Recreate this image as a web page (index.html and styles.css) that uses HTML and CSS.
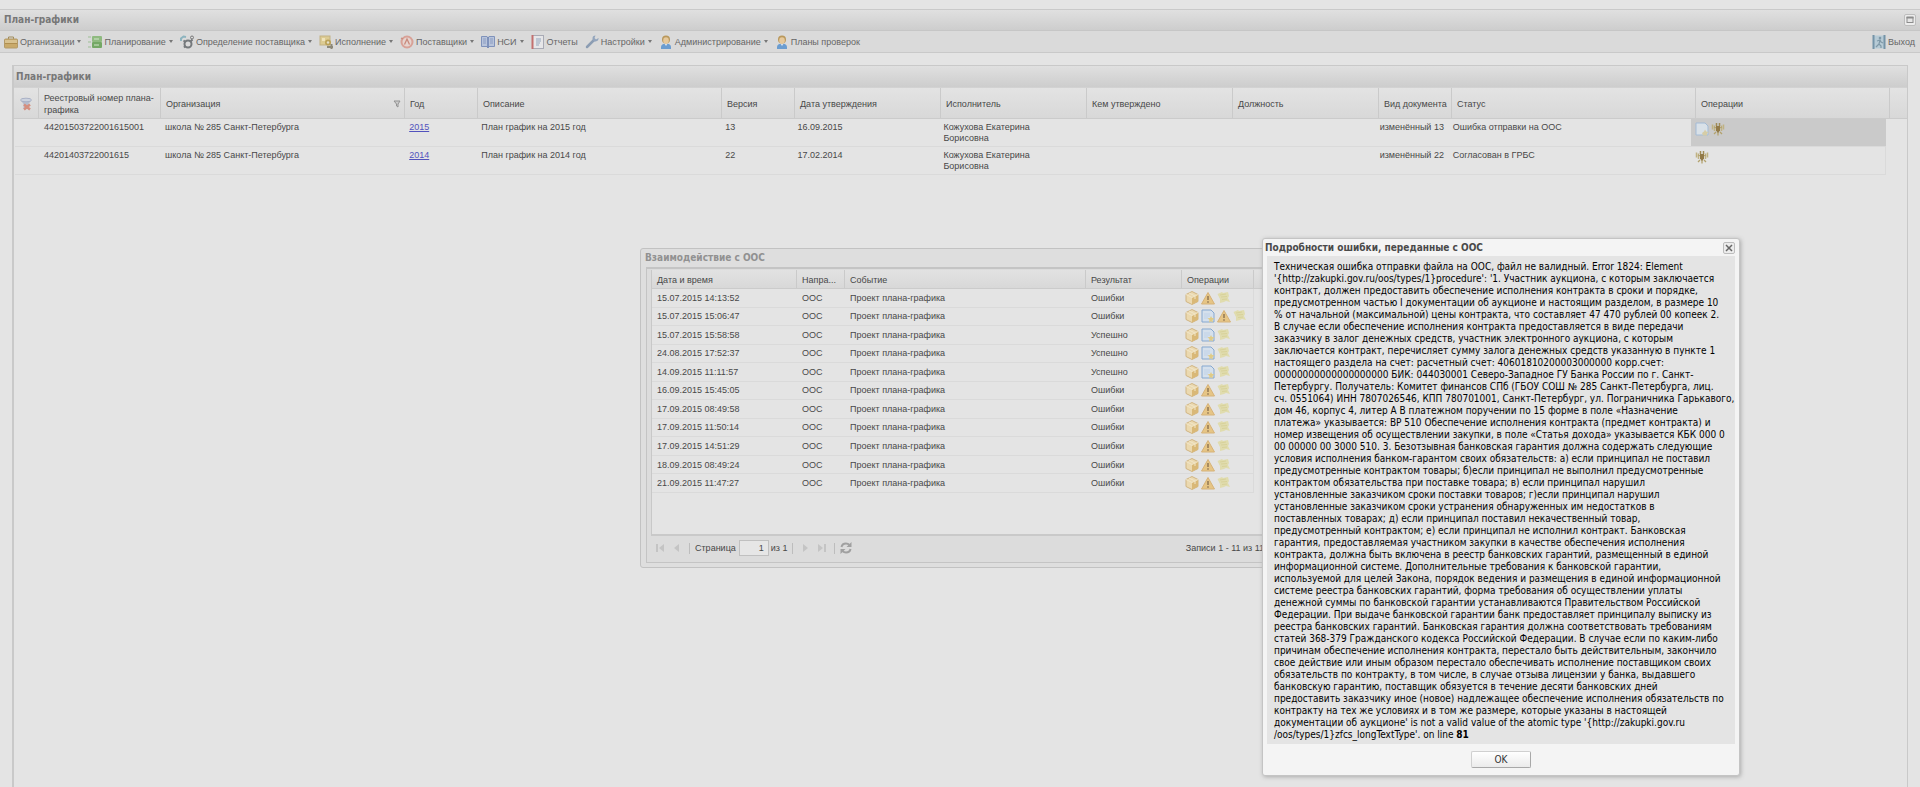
FILE: index.html
```html
<!DOCTYPE html>
<html lang="ru">
<head>
<meta charset="utf-8">
<title>План-графики</title>
<link rel="stylesheet" href="styles.css">
</head>
<body>
<svg class="sprite" aria-hidden="true">
  <symbol id="case" viewBox="0 0 14 14"><path d="M4.500 4V2h5v2" fill="none" stroke="#a08c5c"/><rect x=".5" y="4" width="13" height="9" rx="1" fill="#c9aa6a" stroke="#b39a68"/><path d="M1 5h12v3H1z" fill="#d8c290"/><path d="M1 8.500h12" stroke="#b08f50"/></symbol>
  <symbol id="plan" viewBox="0 0 14 14"><rect x="4" y="1" width="10" height="6" rx="1" fill="#8fba80"/><rect x="4" y="7" width="10" height="6" rx="1" fill="#74a865"/><path d="M6 4h5M6 10h5" stroke="#d2e6cb"/><path d="M0 2h3M0 7h3M0 12h3" stroke="#9dbf95"/></symbol>
  <symbol id="gears" viewBox="0 0 14 14"><circle cx="8" cy="9" r="3.500" fill="none" stroke="#75797c" stroke-width="2"/><path d="M1 6V3.500L3.500 1.500 6 2" fill="none" stroke="#8db4bf" stroke-width="2"/><circle cx="12" cy="2.500" r="1.500" fill="none" stroke="#777"/><path d="M3.500 5.500l2 1.500M10.500 6.500l2-2M4 12.500l1.500-1.500" stroke="#75797c" stroke-width="2"/></symbol>
  <symbol id="exec" viewBox="0 0 14 14"><rect x="1" y="1" width="10" height="9" fill="#dccb93" stroke="#c2b183"/><path d="M3 3h3v3H3z" fill="#efe3bd"/><circle cx="9" cy="7.500" r="3" fill="#bba258"/><circle cx="9" cy="7.500" r="1.200" fill="#e5dfc8"/><path d="M8 12h6M12.500 9v5" stroke="#8c8878" stroke-width="2"/></symbol>
  <symbol id="supplier" viewBox="0 0 14 14"><circle cx="7" cy="7" r="5.500" fill="#e6d4cf" stroke="#d8a197" stroke-width="2"/><path d="M4.500 9.500L7 4l2.500 5.500M1 3l2 1" fill="none" stroke="#c9897c" stroke-width="1.300"/></symbol>
  <symbol id="book" viewBox="0 0 14 14"><path d="M.5 1.500h5.500l1 1 1-1h5.500v10H8l-1 1-1-1H.5z" fill="#b8c4db" stroke="#7f92bb"/><path d="M7 2v11" stroke="#6d82b0" stroke-width="1.500"/><path d="M2 4h3M2 6h3M2 8h3M9 4h3M9 6h3M9 8h3" stroke="#8b9cc2"/></symbol>
  <symbol id="report" viewBox="0 0 14 14"><rect x="1.500" y=".5" width="11" height="13" fill="#e6e6e8" stroke="#a9abb5"/><path d="M1.500 0v14" stroke="#c3706f" stroke-width="2"/><path d="M5 4h5M5 6h5M5 8h4M5 10h3" stroke="#93a6bd"/></symbol>
  <symbol id="wrench" viewBox="0 0 14 14"><path d="M2 12l7-7" stroke="#8c9db3" stroke-width="2.500" stroke-linecap="round"/><path d="M13.500 3a3 3 0 1 1-3-2.500L9.500 3l1.500 1.500z" fill="#93a5bd"/></symbol>
  <symbol id="user" viewBox="0 0 14 14"><path d="M2 14v-2c0-2 2-3.500 5-3.500s5 1.500 5 3.500v2z" fill="#6b9dd0"/><path d="M5 8h4l-2 3z" fill="#dbe3ea"/><circle cx="7" cy="4.500" r="4" fill="#b9985c"/><ellipse cx="7" cy="5.500" rx="2.800" ry="3.200" fill="#e6c99c"/></symbol>
  <symbol id="exit" viewBox="0 0 14 14"><rect x="1" y=".5" width="12" height="13" fill="#b7cbd6"/><path d="M1.500 0v14M12.500 0v14" stroke="#7594a8" stroke-width="2"/><circle cx="8" cy="3" r="1.300" fill="#7f99a8"/><path d="M5 6l3-1 1 2 2 1M8 5L7 9l2 2v2M7 9l-3 3" fill="none" stroke="#7f99a8" stroke-width="1.200"/></symbol>
  <symbol id="unfilter" viewBox="0 0 14 14"><path d="M1.500 3h11L9.500 7v5h-5V7z" fill="#b5bccd"/><ellipse cx="7" cy="3" rx="5.500" ry="1.800" fill="#ccd2de" stroke="#a9b1c6"/><path d="M5 7.500l6 5M11 7.500l-6 5" stroke="#d58f7f" stroke-width="2.500"/></symbol>
  <symbol id="page" viewBox="0 0 14 14"><path d="M1 1h9l3 3v9H1z" fill="#d5e0ec" stroke="#86a8d0"/><path d="M3 5h6M3 7h6M3 9h4" stroke="#c0d2e8"/><path d="M10 7l1 2 2.500.300-2 1.700.500 2.500-2-1.200-2 1.200.500-2.500-2-1.700L9 9z" fill="#e0cb86"/></symbol>
  <symbol id="draft" viewBox="0 0 14 14"><path d="M1 1h9l3 3v9H1z" fill="#d9e1e8" stroke="#a3bbd6"/><path d="M10 7.500l1.200 2 2.300.500-1.500 1.500v2H8L7 11l2-1.500z" fill="#d6cda6"/></symbol>
  <symbol id="eagle" viewBox="0 0 14 14"><path d="M1.500 2.500v5M3.500 3.500v5.500M12.500 2.500v5M10.500 3.500v5.500" stroke="#c0b283" stroke-width="1.500"/><path d="M3 5l2.500 1M11 5L8.500 6M5 10l-2 2M9 10l2 2M7 10v3.500" stroke="#b3a26d" stroke-width="1.300"/><path d="M5.500 1v3M8.500 1v3" stroke="#a08c55" stroke-width="1.500"/><path d="M5 4h4v4.500L7 11 5 8.500z" fill="#927a48"/></symbol>
  <symbol id="box" viewBox="0 0 14 14"><path d="M7 .5l6 3v7l-6 3-6-3v-7z" fill="#ebd9b0" stroke="#d0b582"/><path d="M7 6.500l6-3v7l-6 3z" fill="#d9b877"/><path d="M1 3.500l6 3 6-3M4 2l6 3v3" fill="none" stroke="#f1e6c8"/></symbol>
  <symbol id="warn" viewBox="0 0 14 14"><path d="M7 1.500L13.500 13H.5z" fill="#e6c585" stroke="#d6b278" stroke-linejoin="round"/><path d="M7 5v4M7 10.300v1.400" stroke="#856a4c" stroke-width="1.300"/></symbol>
  <symbol id="note" viewBox="0 0 14 14"><path d="M.5 3L5 1l1 1 5-1 1 4-1 2 2 4-4-1-2 1-4 1 0-4z" fill="#e0dcae"/><path d="M3 4l6-1M4 6l6-.500M5 8.500l5-.500" stroke="#d8d29a"/></symbol>
  <symbol id="funnel" viewBox="0 0 8 8"><path d="M1 1h6L5 4v3L3.500 6V4z" fill="#ccc" stroke="#929292"/></symbol>
  <symbol id="first" viewBox="0 0 10 10"><path d="M1 1h2v8H1zM9 1v8L4 5z" fill="#c4c4c4"/></symbol>
  <symbol id="prev" viewBox="0 0 10 10"><path d="M7 1v8L2 5z" fill="#c4c4c4"/></symbol>
  <symbol id="next" viewBox="0 0 10 10"><path d="M3 1v8l5-4z" fill="#c4c4c4"/></symbol>
  <symbol id="last" viewBox="0 0 10 10"><path d="M7 1h2v8H7zM1 1v8l5-4z" fill="#c4c4c4"/></symbol>
  <symbol id="reload" viewBox="0 0 12 12"><path d="M1.500 5C2 2.500 4 1.500 6 1.500c1.500 0 2.500.500 3.500 1.500M10.500 7C10 9.500 8 10.500 6 10.500c-1.500 0-2.500-.500-3.500-1.500" fill="none" stroke="#a0a0a0" stroke-width="2"/><path d="M11.500 0v5h-5zM.5 12V7h5z" fill="#a0a0a0"/></symbol>
</svg>

<div class="app">
  <header class="bar">
    <h1 class="title">План-графики</h1>
    <button class="tool" type="button" aria-label="Развернуть"><svg viewBox="0 0 10 10"><rect x="2" y="2.500" width="6" height="5" fill="#e6e6e6" stroke="#8c8c8c"/><path d="M1.500 2.500h7" stroke="#8c8c8c" stroke-width="2"/></svg></button>
  </header>
  <nav class="menu">
    <button class="item drop" type="button"><svg class="icon"><use href="#case"/></svg>Организации</button>
    <button class="item drop" type="button"><svg class="icon"><use href="#plan"/></svg>Планирование</button>
    <button class="item drop" type="button"><svg class="icon"><use href="#gears"/></svg>Определение поставщика</button>
    <button class="item drop" type="button"><svg class="icon"><use href="#exec"/></svg>Исполнение</button>
    <button class="item drop" type="button"><svg class="icon"><use href="#supplier"/></svg>Поставщики</button>
    <button class="item drop" type="button"><svg class="icon"><use href="#book"/></svg>НСИ</button>
    <button class="item" type="button"><svg class="icon"><use href="#report"/></svg>Отчеты</button>
    <button class="item drop" type="button"><svg class="icon"><use href="#wrench"/></svg>Настройки</button>
    <button class="item drop" type="button"><svg class="icon"><use href="#user"/></svg>Администрирование</button>
    <button class="item" type="button"><svg class="icon"><use href="#user"/></svg>Планы проверок</button>
    <button class="item exit" type="button"><svg class="icon"><use href="#exit"/></svg>Выход</button>
  </nav>

  <main class="panel">
    <div class="bar inner"><h2 class="title">План-графики</h2></div>
    <div class="head-wrap">
      <table class="grid head">
        <colgroup><col class="w25"><col class="w122"><col class="w244"><col class="w73"><col class="w244"><col class="w73"><col class="w146"><col class="w146"><col class="w146"><col class="w146"><col class="w73"><col class="w244"><col class="w194"></colgroup>
        <thead><tr>
          <th class="pic"><svg class="icon"><use href="#unfilter"/></svg></th><th>Реестровый номер плана-<br>графика</th><th><span class="filtered">Организация<svg class="funnel"><use href="#funnel"/></svg></span></th><th>Год</th><th>Описание</th><th>Версия</th><th>Дата утверждения</th><th>Исполнитель</th><th>Кем утверждено</th><th>Должность</th><th>Вид документа</th><th>Статус</th><th>Операции</th>
        </tr></thead>
      </table>
    </div>
    <div class="body-wrap">
      <table class="grid rows">
        <colgroup><col class="w25"><col class="w121"><col class="w244"><col class="w72"><col class="w244"><col class="w72"><col class="w146"><col class="w146"><col class="w145"><col class="w145"><col class="w73"><col class="w242"><col class="w195"></colgroup>
        <tbody>
          <tr><td></td><td>44201503722001615001</td><td>школа № 285 Санкт-Петербурга</td><td><a href="#y2015">2015</a></td><td>План график на 2015 год</td><td>13</td><td>16.09.2015</td><td>Кожухова Екатерина<br>Борисовна</td><td></td><td></td><td>изменённый 13</td><td>Ошибка отправки на ООС</td><td class="current"><span class="ops"><svg class="icon"><use href="#draft"/></svg><svg class="icon"><use href="#eagle"/></svg></span></td></tr>
          <tr><td></td><td>44201403722001615</td><td>школа № 285 Санкт-Петербурга</td><td><a href="#y2014">2014</a></td><td>План график на 2014 год</td><td>22</td><td>17.02.2014</td><td>Кожухова Екатерина<br>Борисовна</td><td></td><td></td><td>изменённый 22</td><td>Согласован в ГРБС</td><td class="edge"><span class="ops"><svg class="icon"><use href="#eagle"/></svg></span></td></tr>
        </tbody>
      </table>
    </div>
  </main>
</div>

<section class="window log">
  <h2 class="title">Взаимодействие с ООС</h2>
  <div class="frame">
    <div class="log-head">
      <table class="log-grid">
        <colgroup><col class="w145"><col class="w48"><col class="w241"><col class="w96"><col class="w72"></colgroup>
        <thead><tr><th>Дата и время</th><th>Напра...</th><th>Событие</th><th>Результат</th><th>Операции</th></tr></thead>
      </table>
    </div>
    <div class="log-body">
      <table class="log-grid log-rows">
        <colgroup><col class="w145"><col class="w48"><col class="w241"><col class="w96"><col class="w72"></colgroup>
        <tbody id="log"></tbody>
      </table>
    </div>
    <div class="pager">
      <button class="nav" type="button" aria-label="Первая"><svg><use href="#first"/></svg></button>
      <button class="nav" type="button" aria-label="Предыдущая"><svg><use href="#prev"/></svg></button>
      <span class="sep"></span>
      <label class="page-box">Страница<input type="text" value="1"></label><span>из 1</span>
      <span class="sep"></span>
      <button class="nav" type="button" aria-label="Следующая"><svg><use href="#next"/></svg></button>
      <button class="nav" type="button" aria-label="Последняя"><svg><use href="#last"/></svg></button>
      <span class="sep"></span>
      <button class="nav reload" type="button" aria-label="Обновить"><svg><use href="#reload"/></svg></button>
      <span class="total">Записи 1 - 11 из 11</span>
    </div>
  </div>
</section>

<section class="window dialog" role="dialog" aria-labelledby="dlg">
  <header class="dialog-head">
    <h2 class="title" id="dlg">Подробности ошибки, переданные с ООС</h2>
    <button class="tool" type="button" aria-label="Закрыть"><svg viewBox="0 0 10 10"><path d="M2 2l6 6M8 2L2 8" stroke="#666" stroke-width="1.500"/></svg></button>
  </header>
  <p class="message">Техническая ошибка отправки файла на ООС, файл не валидный. Error 1824: Element<br>
'{http://zakupki.gov.ru/oos/types/1}procedure': '1. Участник аукциона, с которым заключается<br>
контракт, должен предоставить обеспечение исполнения контракта в сроки и порядке,<br>
предусмотренном частью I документации об аукционе и настоящим разделом, в размере 10<br>
% от начальной (максимальной) цены контракта, что составляет 47 470 рублей 00 копеек 2.<br>
В случае если обеспечение исполнения контракта предоставляется в виде передачи<br>
заказчику в залог денежных средств, участник электронного аукциона, с которым<br>
заключается контракт, перечисляет сумму залога денежных средств указанную в пункте 1<br>
настоящего раздела на счет: расчетный счет: 40601810200003000000 корр.счет:<br>
00000000000000000000 БИК: 044030001 Северо-Западное ГУ Банка России по г. Санкт-<br>
Петербургу. Получатель: Комитет финансов СПб (ГБОУ СОШ № 285 Санкт-Петербурга, лиц.<br>
сч. 0551064) ИНН 7807026546, КПП 780701001, Санкт-Петербург, ул. Пограничника Гарькавого,<br>
дом 46, корпус 4, литер А В платежном поручении по 15 форме в поле «Назначение<br>
платежа» указывается: ВР 510 Обеспечение исполнения контракта (предмет контракта) и<br>
номер извещения об осуществлении закупки, в поле «Статья дохода» указывается КБК 000 0<br>
00 00000 00 3000 510. 3. Безотзывная банковская гарантия должна содержать следующие<br>
условия исполнения банком-гарантом своих обязательств: а) если принципал не поставил<br>
предусмотренные контрактом товары; б)если принципал не выполнил предусмотренные<br>
контрактом обязательства при поставке товара; в) если принципал нарушил<br>
установленные заказчиком сроки поставки товаров; г)если принципал нарушил<br>
установленные заказчиком сроки устранения обнаруженных им недостатков в<br>
поставленных товарах; д) если принципал поставил некачественный товар,<br>
предусмотренный контрактом; е) если принципал не исполнил контракт. Банковская<br>
гарантия, предоставляемая участником закупки в качестве обеспечения исполнения<br>
контракта, должна быть включена в реестр банковских гарантий, размещенный в единой<br>
информационной системе. Дополнительные требования к банковской гарантии,<br>
используемой для целей Закона, порядок ведения и размещения в единой информационной<br>
системе реестра банковских гарантий, форма требования об осуществлении уплаты<br>
денежной суммы по банковской гарантии устанавливаются Правительством Российской<br>
Федерации. При выдаче банковской гарантии банк предоставляет принципалу выписку из<br>
реестра банковских гарантий. Банковская гарантия должна соответствовать требованиям<br>
статей 368-379 Гражданского кодекса Российской Федерации. В случае если по каким-либо<br>
причинам обеспечение исполнения контракта, перестало быть действительным, закончило<br>
свое действие или иным образом перестало обеспечивать исполнение поставщиком своих<br>
обязательств по контракту, в том числе, в случае отзыва лицензии у банка, выдавшего<br>
банковскую гарантию, поставщик обязуется в течение десяти банковских дней<br>
предоставить заказчику иное (новое) надлежащее обеспечение исполнения обязательств по<br>
контракту на тех же условиях и в том же размере, которые указаны в настоящей<br>
документации об аукционе' is not a valid value of the atomic type '{http://zakupki.gov.ru<br>
/oos/types/1}zfcs_longTextType'. on line <b>81</b></p>
  <footer class="dialog-foot"><button class="ok" type="button">OK</button></footer>
</section>
<script src="log.js"></script>
</body>
</html>
```
FILE: styles.css
```css
* { box-sizing: border-box; }
html, body { margin: 0; height: 100%; }
body {
  position: relative;
  overflow: hidden;
  background: #e4e4e4;
  color: #484848;
  font: 9px/12px "Liberation Sans", Arial, sans-serif;
}
button, input { font: inherit; color: inherit; margin: 0; }
button { padding: 0; border: 0; background: none; }
svg { display: block; }
.sprite { position: absolute; width: 0; height: 0; }
.icon { width: 14px; height: 14px; flex: none; }

.app { display: flex; flex-direction: column; height: 100%; padding-top: 9px; }
.bar {
  display: flex;
  align-items: center;
  justify-content: space-between;
  height: 22px;
  padding: 0 4px;
  border-top: 1px solid #c9c9c9;
  border-bottom: 1px solid #c6c6c6;
  background: linear-gradient(#e0e0e0, #cdcdcd);
  flex: none;
}
.title {
  margin: 0;
  color: #777;
  font: bold 10px/12px "DejaVu Sans Condensed", "DejaVu Sans", sans-serif;
}
.tool {
  width: 12px;
  height: 12px;
  border: 1px solid #bdbdbd;
  border-radius: 2px;
  background: #ececec;
}
.tool svg { width: 10px; height: 10px; }

.menu {
  display: flex;
  align-items: center;
  gap: 7px;
  height: 22px;
  padding: 0 5px 0 4px;
  border-bottom: 1px solid #c9c9c9;
  background: #dadada;
  color: #666;
  flex: none;
}
.item { display: flex; align-items: center; gap: 2px; white-space: nowrap; }
.drop::after {
  content: "";
  margin-left: 1px;
  border: 2px solid transparent;
  border-top: 3px solid #777;
  border-bottom: 0;
}
.exit { margin-left: auto; }

.panel {
  flex: 1;
  margin: 12px 12px 0;
  border: 1px solid #c9c9c9;
  border-bottom: 0;
  border-left-width: 2px;
  overflow: hidden;
}
.inner { border-top: 0; padding-left: 2px; border-bottom-color: #d2d2d2; }
.head-wrap {
  padding-right: 17px;
  border-bottom: 1px solid #cbcbcb;
  background: linear-gradient(#e3e3e3, #d8d8d8);
}
.body-wrap { padding: 0 21px 0 1px; }
.grid, .log-grid { width: 100%; table-layout: fixed; border-collapse: separate; border-spacing: 0; }
.grid th, .log-grid th { text-align: left; font-weight: normal; white-space: nowrap; }
.grid th { height: 30px; padding: 2px 0 0 5px; border-right: 1px solid #cacaca; }
.grid td { height: 28px; padding: 3px 0 2px 4px; border-bottom: 1px solid #dadada; line-height: 11px; vertical-align: top; white-space: nowrap; }
.grid a { color: #5252bd; }
.filtered { display: flex; justify-content: space-between; align-items: center; padding-right: 3px; }
.funnel { width: 8px; height: 8px; }
.grid .current { background: #cacaca; }
.grid .edge { border-right: 1px solid #dadada; }
.ops { display: flex; gap: 2px; height: 14px; }
.grid .ops { height: 11px; }

.w25 { width: 25px; } .w48 { width: 48px; } .w72 { width: 72px; } .w73 { width: 73px; }
.w96 { width: 96px; } .w121 { width: 121px; } .w122 { width: 122px; } .w145 { width: 145px; }
.w146 { width: 146px; } .w194 { width: 194px; } .w195 { width: 195px; }
.w241 { width: 241px; } .w242 { width: 242px; } .w244 { width: 244px; }

.window { position: absolute; }
.log {
  left: 640px;
  top: 248px;
  width: 640px;
  padding: 3px 5px 4px;
  border: 1px solid #c2c2c2;
  border-radius: 3px;
  background: #dedede;
}
.log .title { padding: 0 0 3px; margin-left: -1px; color: #919191; }
.frame { padding: 1px 5px 0 4px; border: 1px solid #c4c4c4; border-top-width: 2px; background: #dcdcdc; }
.log-head { padding-right: 18px; border-left: 1px solid #c8c8c8; border-bottom: 1px solid #cbcbcb; background: linear-gradient(#e2e2e2, #d8d8d8); }
.log-head th { height: 18px; padding: 1px 0 0 5px; border-right: 1px solid #cacaca; }
.log-body { height: 247px; padding-right: 18px; border-left: 1px solid #c8c8c8; border-bottom: 2px solid #c9c9c9; background: #e4e4e4; }
.log-rows { height: 204px; }
.log-rows td { padding: 0 0 0 5px; border-bottom: 1px solid #dadada; white-space: nowrap; }
.log-rows td:last-child { padding-left: 3px; border-right: 1px solid #dadada; }

.pager { display: flex; align-items: center; height: 26px; padding: 0 4px 2px; white-space: nowrap; }
.nav { width: 17px; height: 12px; }
.nav svg { width: 10px; height: 10px; }
.reload svg { width: 12px; height: 12px; }
.sep { width: 1px; height: 11px; margin: 0 5px 0 0; background: #bdbdbd; }
.page-box { display: flex; align-items: center; gap: 3px; }
.page-box input { width: 30px; height: 16px; padding: 0 4px; border: 1px solid #c0c0c0; background: #e6e6e6; text-align: right; }
.page-box + span { margin: 0 5px 0 2px; }
.sep + .nav { margin-left: 2px; }
.sep + .reload { margin-left: 0; }
.total { margin-left: auto; }

.dialog {
  left: 1262px;
  top: 238px;
  width: 478px;
  padding: 0 4px;
  border: 1px solid #c4c4c4;
  border-radius: 3px;
  background: #f4f4f4;
  box-shadow: 1px 1px 4px #aaa;
}
.dialog-head { display: flex; align-items: center; justify-content: space-between; height: 17px; }
.dialog .title { color: #4a4a4a; margin-left: -2px; }
.message {
  margin: 0;
  padding: 5px 0 3px 7px;
  background: #e4e4e4;
  color: #000;
  font: 10px/12px "DejaVu Sans Condensed", "DejaVu Sans", sans-serif;
  white-space: nowrap;
}
.dialog-foot { display: flex; justify-content: center; padding: 7px 0; }
.ok {
  width: 60px;
  height: 17px;
  border: 1px solid #a8a8a8;
  border-top-color: #d0d0d0;
  border-left-color: #d0d0d0;
  border-radius: 2px;
  background: linear-gradient(#fff, #ebebeb);
  color: #333;
  font: 10px/12px "DejaVu Sans Condensed", "DejaVu Sans", sans-serif;
}
```
FILE: log.js
```js
const entries = [
  ["15.07.2015 14:13:52", "Ошибки", ["box", "warn", "note"]],
  ["15.07.2015 15:06:47", "Ошибки", ["box", "page", "warn", "note"]],
  ["15.07.2015 15:58:58", "Успешно", ["box", "page", "note"]],
  ["24.08.2015 17:52:37", "Успешно", ["box", "page", "note"]],
  ["14.09.2015 11:11:57", "Успешно", ["box", "page", "note"]],
  ["16.09.2015 15:45:05", "Ошибки", ["box", "warn", "note"]],
  ["17.09.2015 08:49:58", "Ошибки", ["box", "warn", "note"]],
  ["17.09.2015 11:50:14", "Ошибки", ["box", "warn", "note"]],
  ["17.09.2015 14:51:29", "Ошибки", ["box", "warn", "note"]],
  ["18.09.2015 08:49:24", "Ошибки", ["box", "warn", "note"]],
  ["21.09.2015 11:47:27", "Ошибки", ["box", "warn", "note"]]
];

document.getElementById("log").innerHTML = entries.map(([date, result, icons]) =>
  `<tr><td>${date}</td><td>ООС</td><td>Проект плана-графика</td><td>${result}</td><td><span class="ops">${
    icons.map(name => `<svg class="icon"><use href="#${name}"/></svg>`).join("")
  }</span></td></tr>`).join("");
```
